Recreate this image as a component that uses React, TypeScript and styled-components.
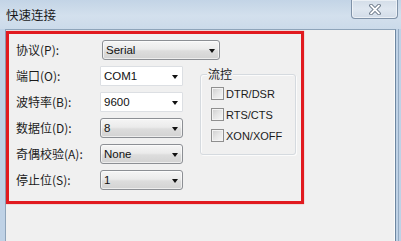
import React from "react";
import styled, { createGlobalStyle } from "styled-components";

const Global = createGlobalStyle`
  html, body { margin: 0; padding: 0; background: #f0f0f0; }
  #root { width: 401px; height: 241px; overflow: hidden; }
`;

const Window = styled.div`
  width: 401px;
  height: 241px;
  display: flex;
  flex-direction: column;
  background: #bfd2e6;
  font-family: "Noto Sans CJK SC", "Noto Sans", sans-serif;
  color: #1b1b1b;
  overflow: hidden;
`;

const TitleBar = styled.div`
  height: 29px;
  flex: none;
  display: flex;
  align-items: flex-start;
  padding-left: 6px;
  background: linear-gradient(180deg, #c3d4e6 0%, #d3e0ed 55%, #cbdaea 100%);
`;

const Title = styled.div`
  margin-top: 7px;
  font-size: 12.5px;
  line-height: 16px;
  color: #1a1a1a;
  letter-spacing: 0px;
`;

const CloseButton = styled.div`
  margin-left: auto;
  margin-right: 3px;
  width: 47px;
  height: 19px;
  box-sizing: border-box;
  border: 1px solid #7f92a8;
  border-top: none;
  border-radius: 0 0 4px 4px;
  background: linear-gradient(180deg, #d3dde8 0%, #dfe7f0 50%, #d2dce8 100%);
  box-shadow: inset 0 0 0 1px rgba(255, 255, 255, 0.55);
  display: flex;
  align-items: center;
  justify-content: center;
`;

const Body = styled.div`
  flex: 1;
  display: flex;
  padding: 0 5px 0 5px;
  background: linear-gradient(90deg, #bfd2e6 0, #bfd2e6 398px, #93aac2 398px, #93aac2 399px, #bfd2e6 399px);
`;

const Client = styled.div`
  flex: 1;
  background: #f0f0f0;
  border-top: 1px solid #8ea4ba;
  border-left: 1px solid #8ea4ba;
  border-right: 1px solid #6d86a0;
  box-shadow: inset -1px 0 0 #fbfbfb;
  padding-top: 1px;
`;

const Highlight = styled.div`
  width: 298px;
  height: 173px;
  box-sizing: border-box;
  border: 3px solid #e11a1f;
  box-shadow: 0 0 1px rgba(200, 0, 0, 0.5);
  padding: 6px 0 0 7px;
`;

const FormGrid = styled.div`
  display: grid;
  grid-template-columns: 84px 83px 17px 96px;
  grid-auto-rows: 20px;
  row-gap: 6px;
`;

const Label = styled.div<{ $row: number }>`
  grid-column: 1;
  grid-row: ${(p) => p.$row};
  font-size: 12px;
  line-height: 20px;
  white-space: nowrap;
  color: #1b1b1b;
`;

const Combo = styled.div<{ $row: number; $editable?: boolean; $wide?: boolean }>`
  grid-column: ${(p) => (p.$wide ? "2 / span 3" : "2")};
  grid-row: ${(p) => p.$row};
  justify-self: start;
  width: ${(p) => (p.$wide ? "118px" : "83px")};
  margin-left: ${(p) => (p.$wide ? "2px" : "0")};
  height: 20px;
  box-sizing: border-box;
  display: flex;
  align-items: center;
  padding: 0 4px 0 3px;
  border-radius: ${(p) => (p.$editable ? "1px" : "3px")};
  border: 1px solid ${(p) => (p.$editable ? "#dcdfe3" : "#8c8f94")};
  background: ${(p) =>
    p.$editable
      ? "#ffffff"
      : "linear-gradient(180deg, #f5f5f5 0%, #ebebeb 45%, #dddddd 55%, #d2d2d2 100%)"};
  box-shadow: ${(p) => (p.$editable ? "none" : "inset 0 0 0 1px rgba(255,255,255,0.6)")};
  font-family: "Liberation Sans", Arial, sans-serif;
  font-size: 11.5px;
  color: #111;
`;

const ComboText = styled.span`
  flex: 1;
  white-space: nowrap;
`;

const Arrow = styled.span`
  width: 0;
  height: 0;
  border-left: 3.5px solid transparent;
  border-right: 3.5px solid transparent;
  border-top: 4px solid #111;
  margin-top: 1px;
`;

const GroupCell = styled.div`
  grid-column: 4;
  grid-row: 2 / span 4;
  align-self: start;
`;

const GroupBox = styled.div`
  position: relative;
  margin-top: 8px;
  width: 96px;
  height: 81px;
  box-sizing: border-box;
  border: 1px solid #d5dadf;
  border-radius: 3px;
  box-shadow: inset 1px 1px 0 #fbfbfb, 1px 1px 0 #fbfbfb;
  padding: 8px 0 0 10px;
  display: flex;
  flex-direction: column;
`;

const GroupTitle = styled.div`
  position: absolute;
  top: -9px;
  left: 6px;
  padding: 0 1px;
  background: #f0f0f0;
  font-size: 12px;
  line-height: 16px;
  color: #1b1b1b;
`;

const CheckRow = styled.div`
  height: 21px;
  display: flex;
  align-items: center;
  gap: 2px;
  font-family: "Liberation Sans", Arial, sans-serif;
  font-size: 11px;
  color: #1b1b1b;
`;

const CheckBox = styled.span`
  width: 13px;
  height: 13px;
  box-sizing: border-box;
  border: 1px solid #8f8f8f;
  background: linear-gradient(135deg, #cdcdcd 0%, #e6e6e6 50%, #f7f7f7 100%);
  box-shadow: inset 0 0 0 1px #f3f3f3;
  flex: none;
`;

const fields = [
  { label: "协议(P):", value: "Serial", wide: true },
  { label: "端口(O):", value: "COM1", editable: true },
  { label: "波特率(B):", value: "9600", editable: true },
  { label: "数据位(D):", value: "8" },
  { label: "奇偶校验(A):", value: "None" },
  { label: "停止位(S):", value: "1" },
];

const flows = ["DTR/DSR", "RTS/CTS", "XON/XOFF"];

export default function App() {
  return (
    <>
      <Global />
      <Window>
        <TitleBar>
          <Title>快速连接</Title>
          <CloseButton>
            <svg width="12" height="11" viewBox="0 0 12 11">
              <path
                d="M2 1.5 L10 9.5 M10 1.5 L2 9.5"
                stroke="#5d6b7c"
                strokeWidth="3.6"
                strokeLinecap="round"
              />
              <path
                d="M2 1.5 L10 9.5 M10 1.5 L2 9.5"
                stroke="#ffffff"
                strokeWidth="1.8"
                strokeLinecap="round"
              />
            </svg>
          </CloseButton>
        </TitleBar>
        <Body>
          <Client>
            <Highlight>
              <FormGrid>
                {fields.map((f, i) => (
                  <React.Fragment key={f.label}>
                    <Label $row={i + 1}>{f.label}</Label>
                    <Combo $row={i + 1} $editable={f.editable} $wide={f.wide}>
                      <ComboText>{f.value}</ComboText>
                      <Arrow />
                    </Combo>
                  </React.Fragment>
                ))}
                <GroupCell>
                  <GroupBox>
                    <GroupTitle>流控</GroupTitle>
                    {flows.map((f) => (
                      <CheckRow key={f}>
                        <CheckBox />
                        {f}
                      </CheckRow>
                    ))}
                  </GroupBox>
                </GroupCell>
              </FormGrid>
            </Highlight>
          </Client>
        </Body>
      </Window>
    </>
  );
}
